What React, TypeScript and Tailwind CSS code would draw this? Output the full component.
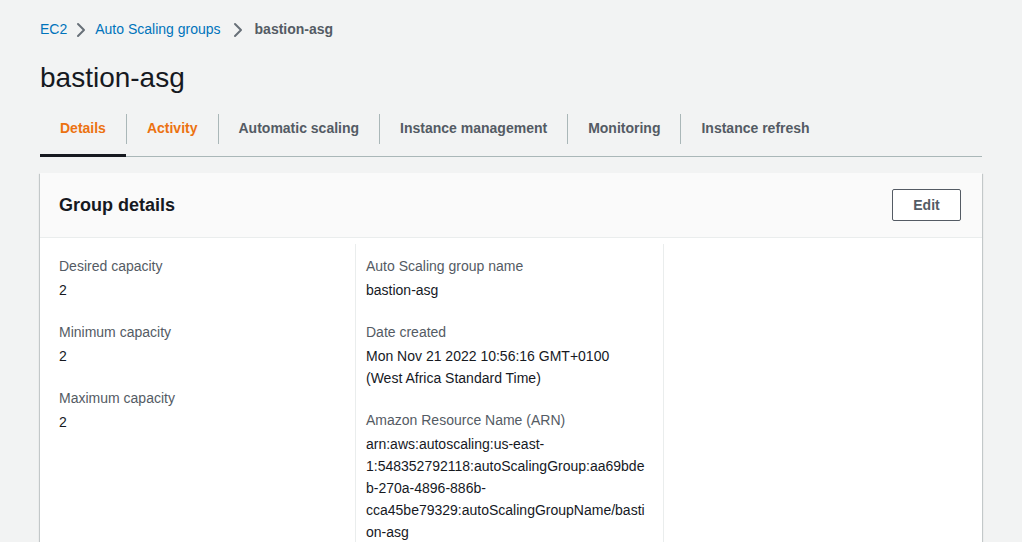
import { ChevronRight } from 'lucide-react'

const tabs = [
  { label: 'Details', active: true },
  { label: 'Activity', hover: true },
  { label: 'Automatic scaling' },
  { label: 'Instance management' },
  { label: 'Monitoring' },
  { label: 'Instance refresh' },
]

const Field = ({ label, children }: { label: string; children: React.ReactNode }) => (
  <div className="mb-[20px]">
    <div className="text-[14px] leading-[22px] text-[#545b64]">{label}</div>
    <div className="mt-[2px] text-[14px] leading-[22px] text-[#16191f]">{children}</div>
  </div>
)

export default function App() {
  return (
    <main
      className="h-[542px] w-[1022px] overflow-hidden bg-[#f2f3f3] pl-[40px] pr-[40px]"
      style={{ fontFamily: '"Liberation Sans", Arial, sans-serif' }}
    >
      <nav className="flex h-[58px] items-center gap-[2px] pt-[1px] text-[14px]">
        <span className="text-[#0073bb]">EC2</span>
        <ChevronRight className="h-[24px] w-[24px] text-[#687078]" strokeWidth={2} />
        <span className="text-[#0073bb]">Auto Scaling groups</span>
        <ChevronRight className="ml-[3px] h-[24px] w-[24px] text-[#687078]" strokeWidth={2} />
        <span className="ml-[3px] font-bold text-[#545b64]">bastion-asg</span>
      </nav>

      <h1 className="h-[40px] text-[28px] leading-[40px] text-[#16191f]">bastion-asg</h1>

      <div className="mt-[11px] flex h-[48px] border-b border-[#aab7b8] pb-[8px]">
        {tabs.map((t, i) => (
          <div key={t.label} className="relative flex items-center">
            {i > 0 && <div className="h-[30px] w-px bg-[#aab7b8]" />}
            <div
              className={
                'flex h-full items-center px-[20px] text-[14px] font-bold ' +
                (t.active || t.hover ? 'text-[#ec7211]' : 'text-[#545b64]')
              }
            >
              {t.label}
            </div>
            {t.active && <div className="absolute bottom-[-9px] left-0 right-0 h-[3px] bg-[#16191f]" />}
          </div>
        ))}
      </div>

      <section className="mt-[16px] bg-white shadow-[0_1px_1px_0_rgba(0,28,36,0.3),1px_1px_1px_0_rgba(0,28,36,0.15),-1px_1px_1px_0_rgba(0,28,36,0.15)]">
        <header className="flex h-[65px] items-center justify-between border-b border-[#eaeded] bg-[#fafafa] pl-[19px] pr-[21px]">
          <h2 className="text-[18px] font-bold text-[#16191f]">Group details</h2>
          <button className="h-[32px] w-[69px] rounded-[2px] border border-[#545b64] bg-white text-[14px] font-bold text-[#545b64]">
            Edit
          </button>
        </header>
        <div className="flex pt-[6px] pb-[20px]">
          <div className="w-[316px] border-r border-[#eaeded] pl-[19px] pr-[10px] pt-[11px]">
            <Field label="Desired capacity">2</Field>
            <Field label="Minimum capacity">2</Field>
            <Field label="Maximum capacity">2</Field>
          </div>
          <div className="w-[308px] border-r border-[#eaeded] pl-[10px] pr-[10px] pt-[11px]">
            <Field label="Auto Scaling group name">bastion-asg</Field>
            <Field label="Date created">
              Mon Nov 21 2022 10:56:16 GMT+0100
              <br />
              (West Africa Standard Time)
            </Field>
            <Field label="Amazon Resource Name (ARN)">
              arn:aws:autoscaling:us-east-
              <br />
              1:548352792118:autoScalingGroup:aa69bde
              <br />
              b-270a-4896-886b-
              <br />
              cca45be79329:autoScalingGroupName/basti
              <br />
              on-asg
            </Field>
          </div>
          <div className="flex-1" />
        </div>
      </section>
    </main>
  )
}
